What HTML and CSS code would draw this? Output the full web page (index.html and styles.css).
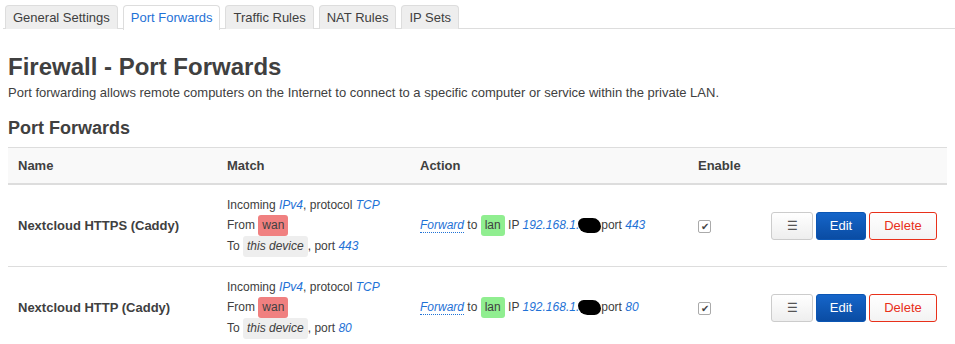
FILE: index.html
```
<!DOCTYPE html>
<html>
<head>
    <meta charset="utf-8" />
    <title>Firewall - Port Forwards</title>
    <link rel="stylesheet" href="styles.css">
</head>

<body>
    <div class="main-box">
        <ul class="tabs">
            <li>General Settings</li>
            <li class="active">Port Forwards</li>
            <li>Traffic Rules</li>
            <li>NAT Rules</li>
            <li>IP Sets</li>
        </ul>

        <h2>Firewall - Port Forwards</h2>
        <div class="map-descr">Port forwarding allows remote computers on the Internet to connect to a specific computer or service within the private LAN.</div>

        <h3>Port Forwards</h3>

        <table class="rules">
            <tr class="head">
                <th class="col-name">Name</th>
                <th class="col-match">Match</th>
                <th class="col-action">Action</th>
                <th class="col-enable">Enable</th>
                <th class="col-btns"></th>
            </tr>
            <tr>
                <td class="name">Nextcloud HTTPS (Caddy)</td>
                <td class="match">
                    <div>Incoming <i class="lnk">IPv4</i>, protocol <i class="lnk">TCP</i></div>
                    <div>From <span class="zone wan">wan</span></div>
                    <div>To <span class="zone dev"><i>this device</i></span>, port <i class="lnk">443</i></div>
                </td>
                <td class="action">
                    <i class="lnk fwd">Forward</i> to <span class="zone lan">lan</span> IP <i class="lnk">192.168.1.</i><span class="redact"></span>port <i class="lnk">443</i>
                </td>
                <td class="enable"><span class="check">&#10004;</span></td>
                <td class="btns">
                    <button class="btn menu">&#9776;</button><button class="btn edit">Edit</button><button class="btn delete">Delete</button>
                </td>
            </tr>
            <tr>
                <td class="name">Nextcloud HTTP (Caddy)</td>
                <td class="match">
                    <div>Incoming <i class="lnk">IPv4</i>, protocol <i class="lnk">TCP</i></div>
                    <div>From <span class="zone wan">wan</span></div>
                    <div>To <span class="zone dev"><i>this device</i></span>, port <i class="lnk">80</i></div>
                </td>
                <td class="action">
                    <i class="lnk fwd">Forward</i> to <span class="zone lan">lan</span> IP <i class="lnk">192.168.1.</i><span class="redact"></span>port <i class="lnk">80</i>
                </td>
                <td class="enable"><span class="check">&#10004;</span></td>
                <td class="btns">
                    <button class="btn menu">&#9776;</button><button class="btn edit">Edit</button><button class="btn delete">Delete</button>
                </td>
            </tr>
        </table>
    </div>
</body>
</html>
```

FILE: styles.css
```
* {
    margin: 0px;
    padding: 0px;
}

body {
    font-family: "Liberation Sans", Arial, sans-serif;
    font-size: 12px;
    color: #404040;
    background: #fff;
}

.main-box {
    padding: 0px 8px;
}

.tabs {
    list-style: none;
    display: flex;
    gap: 5px;
    margin: 0px -8px 0px -5px;
    padding: 5px 0px 0px 2px;
    border-bottom: 1px solid #ddd;
    height: 23px;
}

.tabs li {
    box-sizing: border-box;
    height: 24px;
    padding: 0px 7px;
    line-height: 24px;
    font-size: 13px;
    color: #404040;
    background-color: #eee;
    border: 1px solid #ddd;
    border-bottom: none;
    border-radius: 4px 4px 0px 0px;
}

.tabs li.active {
    background-color: #fff;
    color: #1f72d6;
    height: 25px;
}

h2 {
    margin-top: 24px;
    font-size: 24px;
    line-height: 28px;
    color: #404040;
}

.map-descr {
    margin-top: 3px;
    font-size: 13px;
    line-height: 18px;
}

h3 {
    margin-top: 15px;
    font-size: 18px;
    line-height: 22px;
}

.rules {
    margin-top: 8px;
    width: 939px;
    table-layout: fixed;
    border-collapse: collapse;
    border-top: 1px solid #ddd;
}

.rules th {
    height: 35px;
    text-align: left;
    font-size: 13px;
    background-color: #f9f9f9;
    border-bottom: 2px solid #ddd;
    padding: 0px 10px;
}

.rules td {
    height: 81px;
    vertical-align: middle;
    padding: 0px 10px;
    border-bottom: 1px solid #ddd;
}

.col-name { width: 189px; }
.col-match { width: 173px; }
.col-action { width: 258px; }
.col-enable { width: 53px; }

.name {
    font-weight: bold;
    font-size: 13px;
}

.match div {
    line-height: 20px;
}

.lnk {
    color: #1f72d6;
}

.fwd {
    border-bottom: 1px dotted #1f72d6;
}

.zone {
    display: inline-block;
    padding: 0px 4px;
    line-height: 21px;
    border-radius: 3px;
    color: #404040;
}

.wan {
    background-color: #f08080;
}

.lan {
    background-color: #90ee90;
}

.dev {
    background-color: #eee;
}

.redact {
    display: inline-block;
    width: 23px;
    height: 15px;
    margin: 0px 0px -4px -1px;
    background-color: #000;
    border-radius: 6px 9px 7px 10px;
}

.check {
    display: inline-block;
    box-sizing: border-box;
    width: 13px;
    height: 13px;
    border: 1px solid #aaa;
    border-radius: 2px;
    font-size: 10px;
    line-height: 11px;
    text-align: center;
    color: #444;
    background: #fff;
    vertical-align: middle;
}

.btns {
    text-align: right;
    white-space: nowrap;
}

.btn {
    box-sizing: border-box;
    height: 28px;
    padding: 0px;
    margin-left: 3px;
    font-family: "Liberation Sans", Arial, sans-serif;
    font-size: 13px;
    color: #333;
    border: 1px solid #ccc;
    border-radius: 3px;
    background: linear-gradient(#fff, #eee);
    vertical-align: middle;
}

.menu {
    width: 42px;
    margin-left: 0px;
    font-size: 12px;
    color: #555;
}

.edit {
    width: 50px;
    color: #fff;
    border-color: #0b56b4;
    background: linear-gradient(#1565c9, #0a4ca3);
}

.delete {
    width: 68px;
    color: #e8301a;
    border-color: #e8301a;
    background: linear-gradient(#fff, #f3f3f3);
}
```
